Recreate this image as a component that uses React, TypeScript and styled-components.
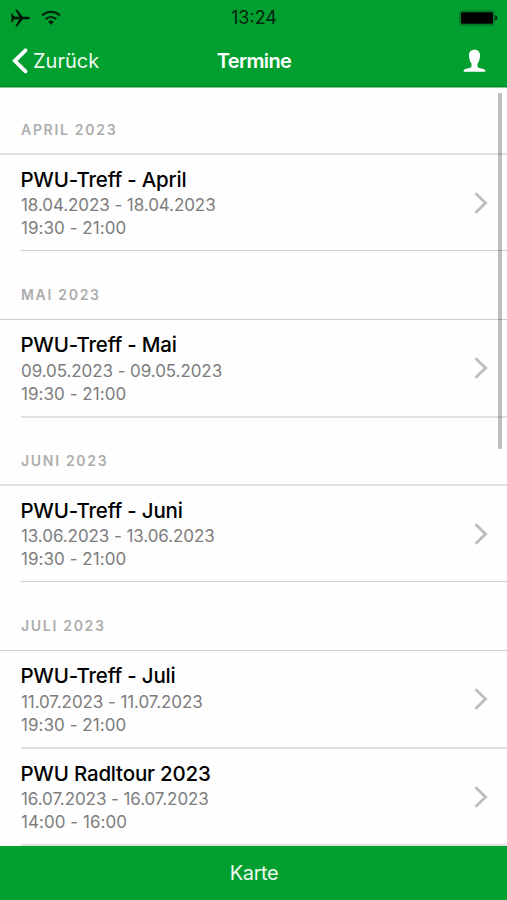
import React from "react";
import styled, { createGlobalStyle } from "styled-components";

const GREEN = "#009f30";

const GlobalStyle = createGlobalStyle`
  * { box-sizing: border-box; }
  body { margin: 0; background: #fff; }
`;

const Screen = styled.div`
  position: relative;
  display: flex;
  flex-direction: column;
  width: 507px;
  height: 900px;
  overflow: hidden;
  background: #fefefe;
  color: #000;
  font-family: Inter, "Liberation Sans", sans-serif;
  white-space: nowrap;
`;

const TopBar = styled.header`
  flex: none;
  height: 88px;
  background: ${GREEN};
  border-bottom: 1px solid #82c696;
  box-shadow: inset 0 -1px 0 #048a2c;
`;

const StatusBar = styled.div`
  display: grid;
  grid-template-columns: 1fr auto 1fr;
  align-items: center;
  height: 34px;
  padding: 0 9px 0 10px;
`;

const StatusIcons = styled.div`
  display: flex;
  align-items: center;
  gap: 10px;
`;

const Clock = styled.time`
  font-size: 18px;
  line-height: 36px;
  color: #04250d;
`;

const BatterySlot = styled.div`
  display: flex;
  justify-content: flex-end;
`;

const NavBar = styled.nav`
  display: grid;
  grid-template-columns: 1fr auto 1fr;
  align-items: center;
  height: 53px;
  padding: 0 21px 0 12px;
  color: #fff;
`;

const BackButton = styled.button`
  display: flex;
  align-items: center;
  gap: 5px;
  padding: 0;
  border: 0;
  background: none;
  color: #effbf1;
  font: 400 20px/30px Inter, sans-serif;
`;

const NavTitle = styled.h1`
  margin: 0 -10px 0 0;
  font-size: 20px;
  font-weight: 600;
  line-height: 30px;
  letter-spacing: -0.65px;
`;

const ProfileButton = styled.button`
  justify-self: end;
  display: flex;
  padding: 0;
  border: 0;
  background: none;
`;

const List = styled.main`
  flex: 1;
  min-height: 0;
  overflow: hidden;
`;

const MonthHeading = styled.h2<{ $height: number; $soft?: boolean }>`
  display: flex;
  align-items: flex-end;
  height: ${(p) => p.$height}px;
  margin: 0;
  padding: 0 21px ${(p) => (p.$soft ? 13 : 14)}px;
  border-bottom: ${(p) => (p.$soft ? "2px solid #e0e0e0" : "1px solid #cdcdcd")};
  color: #adadad;
  font-size: 14px;
  font-weight: 600;
  line-height: 20px;
  letter-spacing: 1.7px;
  text-transform: uppercase;
`;

const EventRow = styled.article<{ $height: number; $soft?: boolean }>`
  display: flex;
  align-items: flex-start;
  justify-content: space-between;
  height: ${(p) => p.$height}px;
  margin-left: 21px;
  padding: 12px 19px 0 0;
  border-bottom: ${(p) => (p.$soft ? "2px solid #e0e0e0" : "1px solid #cdcdcd")};
`;

const EventTitle = styled.h3`
  margin: 0 0 0 -0.6px;
  font-size: 20.5px;
  font-weight: 500;
  line-height: 26px;
  letter-spacing: -0.2px;
`;

const EventDate = styled.p<{ $gap: number }>`
  margin: ${(p) => p.$gap}px 0 0;
  color: #7d7d7d;
  font-size: 17px;
  line-height: 23px;
  letter-spacing: -0.08px;
`;

const EventTime = styled.p`
  margin: 0;
  color: #7d7d7d;
  font-size: 17px;
  line-height: 23px;
  letter-spacing: 0.05px;
`;

const Chevron = styled.svg`
  flex: none;
  margin-top: 24px;
`;

const ScrollThumb = styled.div`
  position: absolute;
  top: 93px;
  right: 5px;
  width: 4px;
  height: 356px;
  background: rgba(0, 0, 0, 0.25);
  border-radius: 1px;
`;

const MapButton = styled.button`
  flex: none;
  height: 54px;
  padding: 0 0 0 1px;
  border: 0;
  background: ${GREEN};
  color: #effbf1;
  font: 400 20px/54px Inter, sans-serif;
  letter-spacing: -0.45px;
`;

type Event = { title: string; date: string; time: string; height: number; gap: number; soft?: boolean };
type Month = { name: string; height: number; soft?: boolean; events: Event[] };

const months: Month[] = [
  { name: "April 2023", height: 67, soft: true, events: [
    { title: "PWU-Treff - April", date: "18.04.2023 - 18.04.2023", time: "19:30 - 21:00", height: 96, gap: 1 },
  ] },
  { name: "Mai 2023", height: 69, events: [
    { title: "PWU-Treff - Mai", date: "09.05.2023 - 09.05.2023", time: "19:30 - 21:00", height: 98, gap: 2, soft: true },
  ] },
  { name: "Juni 2023", height: 68, soft: true, events: [
    { title: "PWU-Treff - Juni", date: "13.06.2023 - 13.06.2023", time: "19:30 - 21:00", height: 96, gap: 1 },
  ] },
  { name: "Juli 2023", height: 69, events: [
    { title: "PWU-Treff - Juli", date: "11.07.2023 - 11.07.2023", time: "19:30 - 21:00", height: 98, gap: 2, soft: true },
    { title: "PWU Radltour 2023", date: "16.07.2023 - 16.07.2023", time: "14:00 - 16:00", height: 97, gap: 1, soft: true },
  ] },
];

export default function App() {
  return (
    <Screen>
      <GlobalStyle />
      <TopBar>
        <StatusBar>
          <StatusIcons>
            <svg width="21" height="18" viewBox="0 0 21 18">
              <path d="M1 4.8h1.2l2 2.7 5 .2L5.2.6h1.9l5.8 7.1h4.4c1.5 0 2.7.6 2.7 1.3s-1.2 1.3-2.7 1.3h-4.4l-5.8 7.1H5.2l4-7.1-5 .2-2 2.7H1L1.7 9z" fill="#04190a" />
            </svg>
            <svg width="20" height="16" viewBox="0 0 20 16" fill="none" stroke="#04250d" strokeWidth="2.2">
              <path d="M1.2 5.6a12.4 12.4 0 0 1 17.6 0" />
              <path d="M4.7 9.2a7.5 7.5 0 0 1 10.6 0" />
              <path d="M7 11.8a4.2 4.2 0 0 1 6 0L10 15z" fill="#04250d" stroke="none" />
            </svg>
          </StatusIcons>
          <Clock>13:24</Clock>
          <BatterySlot>
            <svg width="39" height="16" viewBox="0 0 39 16">
              <rect x=".8" y="1" width="34.4" height="14" rx="2.5" fill="none" stroke="#045c1e" />
              <rect x="2" y="2.2" width="32" height="11.6" rx="1" fill="#000" />
              <path d="M36.2 5.3c1.4.4 2.1 1.4 2.1 2.7s-.7 2.3-2.1 2.7z" fill="#03260d" />
            </svg>
          </BatterySlot>
        </StatusBar>
        <NavBar>
          <BackButton>
            <svg width="16" height="26" viewBox="0 0 16 26">
              <path d="M13.5 2.3 2.8 12.8l10.7 10.5" fill="none" stroke="#fff" strokeWidth="3.8" strokeLinecap="round" />
            </svg>
            Zurück
          </BackButton>
          <NavTitle>Termine</NavTitle>
          <ProfileButton aria-label="Profil">
            <svg width="23" height="24" viewBox="0 0 23 24">
              <path d="M11.5.8c3.6 0 5.5 2.1 5.5 5.6 0 3.4-1.1 6.4-2.5 8.2v2.6c0 1.5 2 1.9 4.3 2.3 2.5.5 3.7 1.3 3.7 3.3H.5c0-2 1.2-2.8 3.7-3.3 2.3-.4 4.3-.8 4.3-2.3v-2.6C7.100 12.800 6 9.800 6 6.400 6 2.900 7.900.8 11.5.8z" fill="#fff" />
            </svg>
          </ProfileButton>
        </NavBar>
      </TopBar>
      <List>
        {months.map((month) => (
          <section key={month.name}>
            <MonthHeading $height={month.height} $soft={month.soft}>{month.name}</MonthHeading>
            {month.events.map((event) => (
              <EventRow key={event.title} $height={event.height} $soft={event.soft}>
                <div>
                  <EventTitle>{event.title}</EventTitle>
                  <EventDate $gap={event.gap}>{event.date}</EventDate>
                  <EventTime>{event.time}</EventTime>
                </div>
                <Chevron width="15" height="24" viewBox="0 0 15 24">
                  <path d="M2.5 2.3 12.6 12 2.5 21.7" fill="none" stroke="#bcbcbc" strokeWidth="2.8" />
                </Chevron>
              </EventRow>
            ))}
          </section>
        ))}
      </List>
      <MapButton>Karte</MapButton>
      <ScrollThumb />
    </Screen>
  );
}
